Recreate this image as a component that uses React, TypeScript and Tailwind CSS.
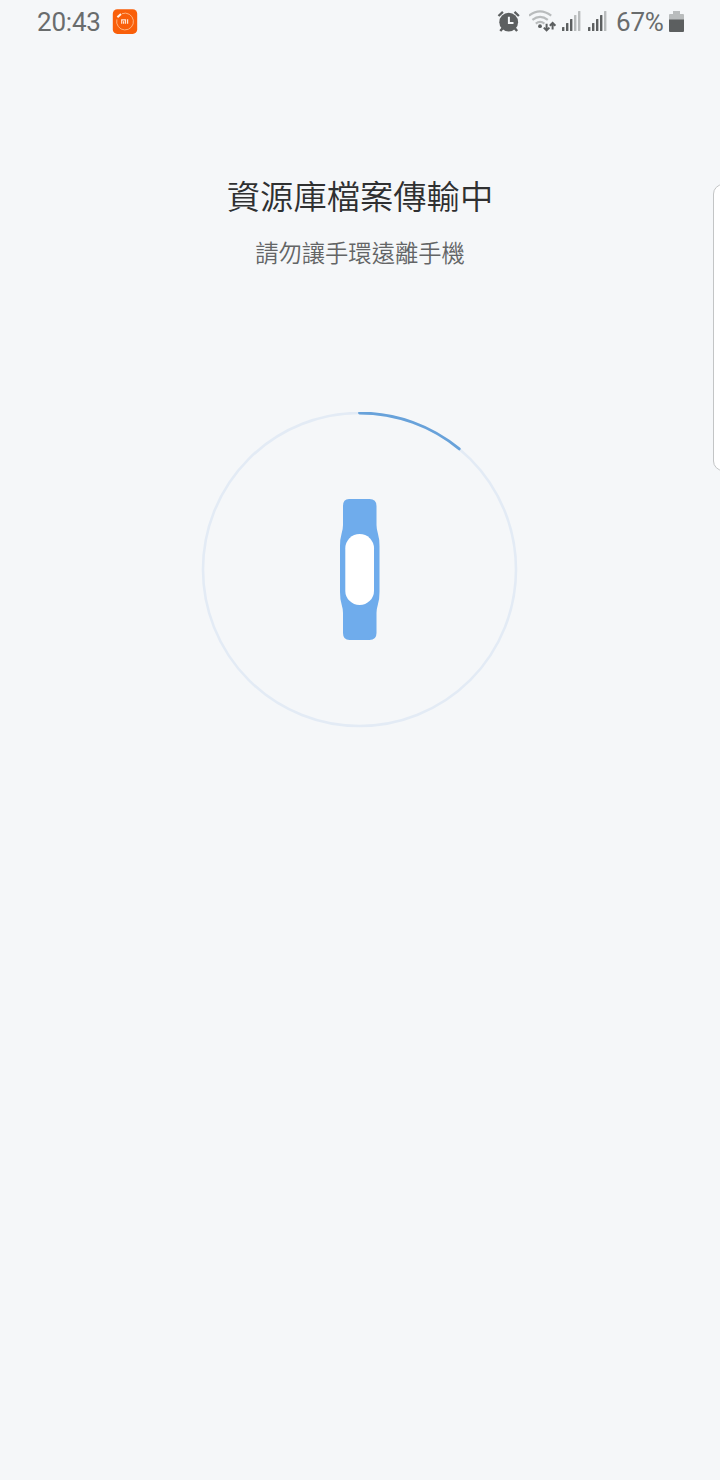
const PROGRESS = 11

function AppBadge() {
    return (
        <svg className="ml-[11px] h-[26px] w-[26px]" viewBox="0 0 26 26" fill="none">
            <rect x="0.8" y="0.3" width="24.4" height="24.6" rx="4.5" fill="#f95f0a" />
            <path d="M10 4.7A8.4 8.4 0 1 1 4.9 10.4" stroke="#ffb27d" strokeWidth="1" />
            <path d="M5.4 8.3 9 5.1" stroke="#fff3e8" strokeWidth="2" />
            <path d="M9.7 14.7v-3.9h3.8v3.9M11.6 14.7v-2.4M15.6 10.3v4.4" stroke="#ffe6d3" strokeWidth="1.2" />
        </svg>
    )
}

function AlarmIcon() {
    return (
        <svg className="h-[24px] w-[24px]" viewBox="0 0 24 24" fill="none">
            <circle cx="11.7" cy="12.2" r="9.4" fill="#5c5f60" />
            <path d="M1.5 6 5.9 1.8M21.9 6 17.5 1.8" stroke="#5c5f60" strokeWidth="2.3" />
            <path d="M5.5 18.4 3.3 21M17.9 18.4l2.2 2.6" stroke="#5c5f60" strokeWidth="2.4" />
            <path d="M11.9 6.7v6.2h4.6" stroke="#f6f8fa" strokeWidth="2" />
        </svg>
    )
}

function WifiIcon() {
    return (
        <svg className="ml-[8px] h-[24px] w-[28px]" viewBox="0 0 28 24" fill="none">
            <path d="M0 5.7Q11-2.9 22.2 5.7M3.4 9.9q7.7-6 15.4 0M6.8 13.6q4.3-3.4 8.6 0" stroke="#b9bcbd" strokeWidth="2.2" />
            <circle cx="11" cy="16.2" r="1.9" fill="#5c5f60" />
            <path d="M17.6 13.8v6.4M14.8 17.6l2.8 2.8 2.8-2.8M23.6 19.4v-6.2M20.8 15.8l2.8-2.8 2.8 2.8" stroke="#5c5f60" strokeWidth="2" />
        </svg>
    )
}

function SignalIcon({ level }: { level: number }) {
    const bars = [4, 8, 12, 16, 20]

    return (
        <svg className="h-[20px] w-[19px]" viewBox="0 0 19 20">
            {bars.map((h, i) => (
                <rect key={h} x={i * 4} y={20 - h} width="2.4" height={h} rx="0.6" fill={i < level ? '#5c5f60' : '#b9bcbd'} />
            ))}
        </svg>
    )
}

function BatteryIcon() {
    return (
        <svg className="ml-[6px] h-[22px] w-[15px]" viewBox="0 0 15 22">
            <path d="M4 0h7v3h3q1 0 1 1v5H0V4q0-1 1-1h3z" fill="#b9bcbd" />
            <path d="M0 8.5h15V20q0 1-1 1H1q-1 0-1-1z" fill="#5c5f60" />
        </svg>
    )
}

function StatusBar() {
    return (
        <header className="flex h-[43px] items-center justify-between pr-9 pl-[37px] font-[Roboto,sans-serif] text-[26px] leading-none text-[#696c6d]">
            <div className="flex items-center">
                <span className="w-[64px] pt-px tracking-[-0.2px] whitespace-nowrap">20:43</span>
                <AppBadge />
            </div>
            <div className="flex items-center">
                <AlarmIcon />
                <WifiIcon />
                <div className="mb-px ml-[5px] flex gap-[7px]">
                    <SignalIcon level={3} />
                    <SignalIcon level={4} />
                </div>
                <span className="ml-[9px] w-[47px] pt-px tracking-[-0.2px] whitespace-nowrap">67%</span>
                <BatteryIcon />
            </div>
        </header>
    )
}

function BandIcon() {
    return (
        <g>
            <path
                d="M149 87h20.5q7 0 7 7v19q0 4 1.5 9t1.5 12v46q0 7-1.5 12t-1.5 9v20q0 7-7 7h-20q-6.5 0-6.5-7v-20q0-4-1.5-9t-1.5-12v-46q0-7 1.5-12t1.5-9V94q0-7 6-7z"
                fill="#6facec"
            />
            <rect x="145.3" y="122" width="28.7" height="71" rx="14.35" fill="#fff" />
        </g>
    )
}

function ProgressRing({ value }: { value: number }) {
    return (
        <svg className="h-[320px] w-[320px]" viewBox="0 0 320 320" fill="none">
            <circle cx="159.5" cy="157.5" r="156.5" stroke="#e3ebf5" strokeWidth="2.6" />
            <circle
                cx="159.5"
                cy="157.5"
                r="156.5"
                stroke="#68a2da"
                strokeWidth="2.8"
                strokeLinecap="round"
                pathLength="100"
                strokeDasharray={`${value} 100`}
                transform="rotate(-90 159.5 157.5)"
            />
            <BandIcon />
        </svg>
    )
}

export default function App() {
    return (
        <div className="relative h-[1480px] w-[720px] overflow-hidden bg-[#f5f7f9]">
            <StatusBar />
            <main className="flex flex-col items-center pt-[128px] font-['Noto_Sans_CJK_TC_DemiLight','Noto_Sans_CJK_TC',sans-serif]">
                <h1 className="text-[33.3px] leading-[48px] font-[350] text-[#2f3031]">資源庫檔案傳輸中</h1>
                <p className="mt-4 text-[23.3px] leading-[34px] font-[350] text-[#636566]">請勿讓手環遠離手機</p>
                <div className="mt-[143px]">
                    <ProgressRing value={PROGRESS} />
                </div>
            </main>
            {/* edge panel handle */}
            <div className="absolute top-[184px] -right-4 h-[287px] w-[23px] rounded-[10px] border-[1.5px] border-[#c3c5c6] bg-white"></div>
        </div>
    )
}
